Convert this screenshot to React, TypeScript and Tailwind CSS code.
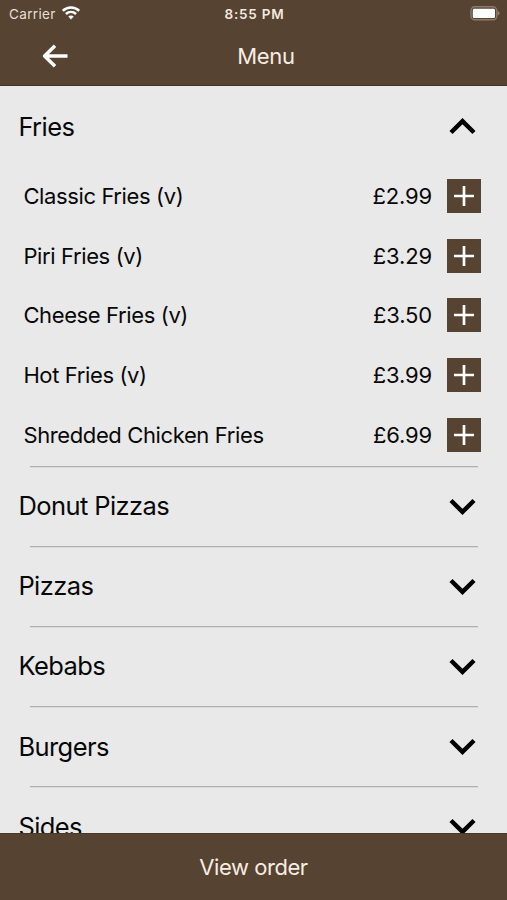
const fries = [
  { name: 'Classic Fries (v)', price: '£2.99' },
  { name: 'Piri Fries (v)', price: '£3.29' },
  { name: 'Cheese Fries (v)', price: '£3.50' },
  { name: 'Hot Fries (v)', price: '£3.99' },
  { name: 'Shredded Chicken Fries', price: '£6.99' },
];

const sections = ['Donut Pizzas', 'Pizzas', 'Kebabs', 'Burgers', 'Sides'];

function Chevron({ open = false }: { open?: boolean }) {
  return (
    <svg width="27" height="17" viewBox="0 0 27 17" fill="none" stroke="#000" strokeWidth="4.4">
      <path d={open ? 'M2 14.5 13.5 3.1 25 14.5' : 'M2 2.5 13.5 13.9 25 2.5'} />
    </svg>
  );
}

function SectionHeader({ title, open }: { title: string; open?: boolean }) {
  return (
    <button className="flex h-20 w-full shrink-0 items-center justify-between pt-px pr-[31px] pl-[18.4px] text-left">
      <span className="text-[25.5px] leading-8 tracking-[-0.58px]">{title}</span>
      <Chevron open={open} />
    </button>
  );
}

function StatusBar() {
  return (
    <div className="grid h-7 grid-cols-3 items-center pr-[7px] pl-[9px] text-[13.5px] leading-4">
      <div className="flex items-center gap-[6px] text-[#eadfd5]">
        <span className="tracking-[0.35px]">Carrier</span>
        <svg className="-mt-[2px]" width="18" height="14" viewBox="0 0 18 14" fill="none" stroke="#fff" strokeWidth="2.5">
          <path d="M.8 4.8C5.4.3 12.6.3 17.2 4.8" />
          <path d="M3.9 8C6.9 5.2 11.1 5.2 14.1 8" />
          <path d="M6.2 10.5C7.8 9 10.2 9 11.8 10.5L9 13.4Z" fill="#fff" stroke="none" />
        </svg>
      </div>
      <span className="text-center font-semibold tracking-[0.75px] whitespace-nowrap text-[#f3e9df]">8:55 PM</span>
      <svg className="-mt-px justify-self-end" width="30" height="15" viewBox="0 0 30 15">
        <rect x="1" y=".8" width="25.8" height="13" rx="3.8" fill="none" stroke="#8b7b6d" strokeWidth="1.4" />
        <rect x="2.8" y="2.7" width="22.2" height="9.3" rx="1.2" fill="#fff" />
        <path d="M27.7 5C30.2 6 30.2 8.6 27.7 9.6Z" fill="#958678" />
      </svg>
    </div>
  );
}

export default function App() {
  return (
    <div className="flex h-[900px] w-[507px] flex-col overflow-hidden bg-[#e9e9e9] font-['Inter','Liberation_Sans',sans-serif] text-[#080808]">
      <header className="h-[86px] shrink-0 border-b border-[#423121] bg-[#564331]">
        <StatusBar />
        <div className="grid h-14 grid-cols-[1fr_auto_1fr] items-center pl-[42px]">
          <button aria-label="Back" className="w-fit">
            <svg width="26" height="24" viewBox="0 0 26 24" fill="none" stroke="#fff" strokeWidth="3.6" strokeLinejoin="round">
              <path d="M25.5 12H3M13 1.8 2.6 12 13 22.2" />
            </svg>
          </button>
          <h1 className="-ml-[17px] text-[22px] leading-7 tracking-[-0.35px] text-[#f6ede4]">Menu</h1>
        </div>
      </header>

      <main className="flex min-h-0 flex-1 flex-col overflow-hidden">
        <SectionHeader title="Fries" open />
        <ul className="h-[299.5px] shrink-0">
          {fries.map((item) => (
            <li key={item.name} className="flex h-[59.8px] items-center pr-[26px] pl-[23.4px] text-[22px] leading-7">
              <span className="flex-1 tracking-[-0.38px]">{item.name}</span>
              <span className="mr-[15px] tracking-[-0.15px]">{item.price}</span>
              <button aria-label={`Add ${item.name}`} className="flex size-[34px] items-center justify-center bg-[#564331]">
                <svg width="20" height="20" viewBox="0 0 20 20" stroke="#fff" strokeWidth="2.7">
                  <path d="M10 0V20M0 10H20" />
                </svg>
              </button>
            </li>
          ))}
        </ul>
        {sections.map((title) => (
          <section key={title} className="h-[80.2px] shrink-0">
            <div className="mr-[29px] -mb-px ml-[30px] h-px bg-[#b0b0b0] shadow-[0_1px_0_#dadada]" />
            <SectionHeader title={title} />
          </section>
        ))}
      </main>

      <button className="h-[67px] shrink-0 border-t border-[#493928] bg-[#564331] pb-px text-[22px] leading-7 tracking-[-0.45px] text-[#f6ede4]">
        View order
      </button>
    </div>
  );
}
